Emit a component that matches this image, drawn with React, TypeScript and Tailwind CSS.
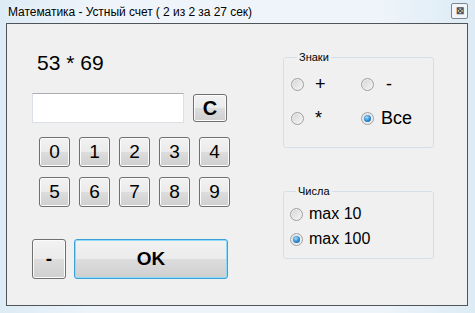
import React from "react";

const btn =
	"flex items-center justify-center rounded-[3px] border border-[#707070] bg-[linear-gradient(#f2f2f2_0%,#ebebeb_50%,#dddddd_50%,#cfcfcf_100%)] shadow-[inset_0_0_0_1px_#fbfbfb] text-black";

function Radio({ checked }: { checked?: boolean }) {
	return (
		<div className="flex h-[13px] w-[13px] shrink-0 items-center justify-center rounded-full border border-[#a0a0a0] bg-[linear-gradient(135deg,#d4d4d4,#f7f7f7)] shadow-[inset_0_0_0_1px_#eeeeee]">
			{checked && (
				<div className="h-[7px] w-[7px] rounded-full bg-[radial-gradient(circle_at_40%_35%,#9fe0ff_0%,#2a86cc_55%,#0d4c86_100%)]" />
			)}
		</div>
	);
}

export default function App() {
	const digits = [
		["0", "1", "2", "3", "4"],
		["5", "6", "7", "8", "9"],
	];

	return (
		<div
			className="flex h-[313px] w-[475px] flex-col bg-[linear-gradient(90deg,#dcebf5,#eef4fa_20%,#eef4fa_80%,#dcebf5)] pb-[7px] pl-[6px]"
			style={{ fontFamily: '"Liberation Sans", Arial, sans-serif' }}>
			{/* Title bar */}
			<div className="flex h-[23px] items-center justify-between pr-[7px]">
				<span className="pl-[2px] pt-[1px] text-[12px] tracking-[-0.05px] text-black [text-shadow:0_0_6px_#ffffff]">
					Математика - Устный счет ( 2 из 2 за 27 сек)
				</span>
				<div className="mb-[2px] flex h-[16px] w-[17px] items-center justify-center rounded-[2px] border border-[#7d8793] bg-[#f3f6f9] text-[10px] font-bold leading-none text-[#4a5360]">
					⊠
				</div>
			</div>

			{/* Client area */}
			<div className="flex w-[462px] flex-1 border border-[#4f5559] bg-[#f0f0f0]">
				{/* Left column */}
				<div className="flex w-[276px] flex-col pl-[25px]">
					<div className="ml-[5px] mt-[27px] h-[23px] text-[21px] leading-[23px] text-black">
						53 * 69
					</div>

					<div className="mt-[19px] flex items-start">
						<div className="h-[30px] w-[152px] border border-[#dbdfe6] border-t-[#abadb3] bg-white" />
						<div className={`${btn} ml-[9px] mt-[1px] h-[28px] w-[34px] text-[20px] font-bold`}>
							C
						</div>
					</div>

					{digits.map((row, i) => (
						<div
							key={i}
							className={`ml-[7px] flex gap-[9px] ${i === 0 ? "mt-[14px]" : "mt-[10px]"}`}>
							{row.map((d) => (
								<div
									key={d}
									className={`${btn} h-[30px] w-[31px] text-[19px]`}>
									{d}
								</div>
							))}
						</div>
					))}

					<div className="mt-[32px] flex gap-[8px]">
						<div className={`${btn} h-[40px] w-[34px] text-[19px] font-bold`}>
							-
						</div>
						<div className="flex h-[40px] w-[154px] items-center justify-center rounded-[3px] border border-[#3aa0d8] bg-[linear-gradient(#f2f2f2_0%,#ebebeb_50%,#dddddd_50%,#cfcfcf_100%)] text-[19px] font-bold text-black shadow-[inset_0_0_0_1px_#8fdcf8]">
							OK
						</div>
					</div>
				</div>

				{/* Right column */}
				<div className="flex flex-col">
					<fieldset className="mt-[27px] w-[151px] rounded-[3px] border border-[#d5dfe5] pb-[17px] pl-[7px]">
						<legend className="ml-[6px] px-[2px] text-[11px] leading-[13px] text-black">
							Знаки
						</legend>
						<div className="mt-[8px] grid grid-cols-[70px_70px] gap-y-[10px] text-[18px] text-black">
							<div className="flex h-[24px] items-center">
								<Radio />
								<span className="ml-[11px]">+</span>
							</div>
							<div className="flex h-[24px] items-center">
								<Radio />
								<span className="ml-[12px]">-</span>
							</div>
							<div className="flex h-[24px] items-center">
								<Radio />
								<span className="ml-[11px]">*</span>
							</div>
							<div className="flex h-[24px] items-center">
								<Radio checked />
								<span className="ml-[7px]">Все</span>
							</div>
						</div>
					</fieldset>

					<fieldset className="mt-[37px] w-[151px] rounded-[3px] border border-[#d5dfe5] pb-[8px] pl-[6px]">
						<legend className="ml-[6px] px-[2px] text-[11px] leading-[13px] text-black">
							Числа
						</legend>
						<div className="mt-[5px] flex flex-col gap-[3px] text-[16px] text-black">
							<div className="flex h-[22px] items-center">
								<Radio />
								<span className="ml-[6px]">max 10</span>
							</div>
							<div className="flex h-[22px] items-center">
								<Radio checked />
								<span className="ml-[6px]">max 100</span>
							</div>
						</div>
					</fieldset>
				</div>
			</div>
		</div>
	);
}
